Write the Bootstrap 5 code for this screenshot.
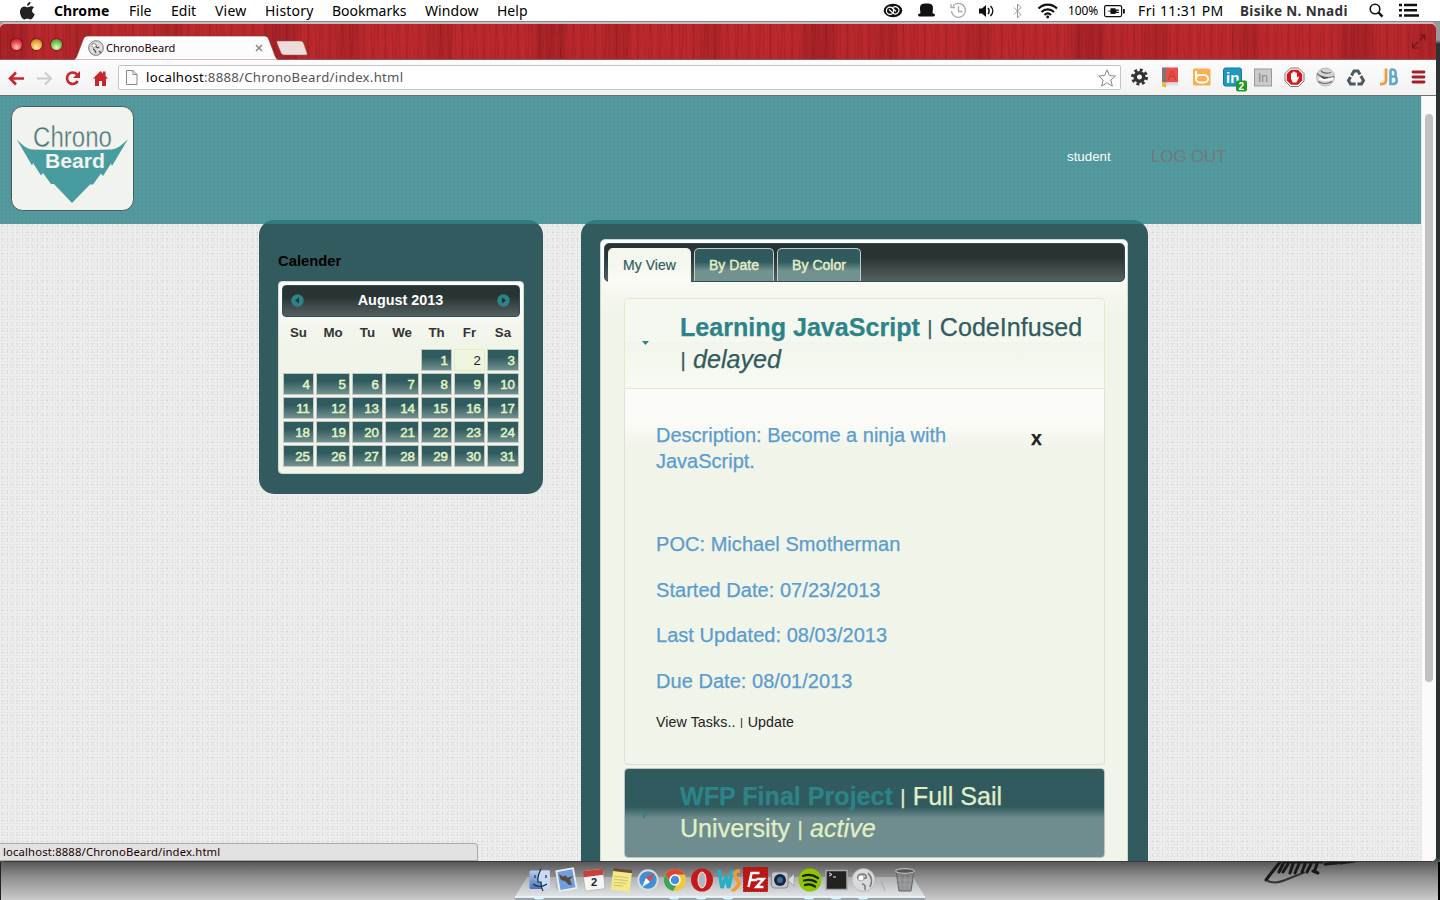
<!DOCTYPE html>
<html lang="en">
<head>
<meta charset="utf-8">
<title>ChronoBeard</title>
<link href="https://cdn.jsdelivr.net/npm/bootstrap@5.3.0/dist/css/bootstrap.min.css" rel="stylesheet">
<style>
:root{--teal:#2c8489;--deep:#325b5f;--cream:#f1f4e9;--lime:#e1f0c4}
html,body{height:900px}
body{width:1440px;overflow:hidden;background:linear-gradient(#999 0,#999 22px,#999 40px,#2c3133 44px,#2c3133 858px,#555 861px,#8b8b8b 876px,#cacaca 900px);font-family:"Liberation Sans",sans-serif;font-size:14px;color:#000;line-height:1.2}
svg{display:block;flex:none}
.ui{font-family:"Noto Sans","Open Sans",sans-serif}
/* menu bar */
.menubar{height:22px;background:#fff;border-bottom:1px solid #888;padding:1px 0 0 19px;font-size:14px;white-space:nowrap;position:relative}
.menubar .item{flex:none}
.m1{width:75px;letter-spacing:.1px}.m2{width:42px}.m3{width:44px}.m4{width:50px;letter-spacing:.2px}.m5{width:67px;letter-spacing:.2px}.m6{width:93px}.m7{width:72px;letter-spacing:.1px}.m8{width:386px}
.tray1{width:36px;font-size:12px;letter-spacing:-.1px;flex:none}.tray2{width:102px;flex:none;letter-spacing:.4px}.tray3{width:126px;flex:none;color:#333;font-size:13.5px;letter-spacing:.36px}
/* window */
.win{width:1436px;height:840px;padding-top:2px;background:#c9b9b9;border-radius:5px 5px 5px 5px;overflow:hidden;border-bottom:1px solid #3a3a3a}
.strip{height:36px;border-radius:5px 5px 0 0;border-bottom:1px solid #8c5c5c;padding-left:11px;position:relative;
background:repeating-linear-gradient(92deg,rgba(80,0,5,.1) 0 1px,transparent 2px 5px,rgba(255,60,60,.07) 6px 7px,transparent 8px 11px),repeating-linear-gradient(88deg,rgba(70,0,5,.09) 0 1px,transparent 2px 7px),repeating-linear-gradient(90deg,rgba(60,0,5,.14) 0 26px,rgba(60,0,5,.02) 30px 60px,rgba(60,0,5,.1) 76px 90px,rgba(60,0,5,0) 92px 150px,rgba(60,0,5,.1) 170px 182px,rgba(60,0,5,0) 184px 260px,rgba(60,0,5,.12) 269px),#b9282d}
.lamp{width:11px;height:11px;border-radius:50%;margin-right:9px;box-shadow:0 0 1px 1px rgba(90,20,20,.6);position:relative;top:3px}
.lamp.r{background:radial-gradient(circle at 50% 75%,#ffc8c0,#ee4348 55%,#a92a30)}
.lamp.y{background:radial-gradient(circle at 50% 75%,#fff0b0,#eba638 55%,#a56a20)}
.lamp.g{background:radial-gradient(circle at 50% 75%,#e0ffc0,#71bf52 55%,#3e7a30)}
.tabshape{position:absolute;left:70px;top:11px}
.tabtext{position:absolute;left:106px;top:16px;font-size:11.1px;line-height:16px;color:#200}
.toolbar-row{height:36px;background:linear-gradient(#fcfcfc,#f2f2f2);border-bottom:1px solid #6f6f6f;padding-left:8px;position:relative}
.omni{width:1003px;height:25px;border:1px solid #c4c4c4;border-radius:2px;background:#fff;padding:0 3px 0 6px;font-size:13.2px;color:#555}
.omni b{font-weight:400;color:#000}
.url{letter-spacing:.26px}
/* page */
.viewport{height:766px;background:#fbfbfb}
.page{width:1421px;overflow:hidden;background-color:#ededed;background-image:radial-gradient(#dadada .7px,transparent .9px),radial-gradient(#d8d8d8 .6px,transparent .9px);background-size:3px 3px,5px 7px}
.top{height:128px;background-color:#53999e;background-image:radial-gradient(rgba(30,100,105,.18) .6px,transparent .8px);background-size:4px 4px;padding:10px 0 0 11px;position:relative}
.who{margin:43px 0 0 933px;color:#fff;font-size:13.3px;width:84px}.out{margin-top:41px;color:#74777a;font-size:17px;letter-spacing:-.15px}
.panelbox{background:linear-gradient(#2e7b80 4px,var(--deep) 4px);border-radius:15px;margin-top:-4px;position:relative}
.cal{width:284px;height:274px;margin-left:259px;padding:32px 19px 0}
.cal h6{font-size:14.8px;font-weight:700;line-height:18px;margin:0 0 11px}
.dp{width:246px;height:193px;border:1px solid #d5d9d5;border-radius:4px;background:linear-gradient(#fff,#f1f4e9 60px);padding:3px}
.dphead{height:32px;border:1px solid #2b5155;border-radius:4px;background:linear-gradient(#283434 35%,#556060);color:#fff;font-weight:700;font-size:14.4px;padding:0 9px 0 8px}
.dphead svg{position:relative;top:-1px}
.week{display:grid;grid-template-columns:31px 34px 31px 34px 31px 31px 32px;gap:2px;padding-left:1px}
.dow{height:32px;align-items:center;text-align:center;font-weight:700;font-size:13.3px;color:#333}
.days>span{height:22px;border:1px solid #c0c8c5;background:linear-gradient(#2f5a5e 35%,#73908f);color:#e1f5c4;text-align:right;padding:0 3px;line-height:22px;font-size:13.3px;-webkit-text-stroke:.5px #e1f5c4}
.days>.today{background:#eef6df;border-color:#dfefbf;color:#222;-webkit-text-stroke:0}
.days>.off{visibility:hidden}
.main{width:567px;height:700px;margin-left:38px;padding:19px 19px 0}
.tabsbox{width:528px;height:690px;border:1px solid #cfd6d3;border-radius:5px;background:linear-gradient(#fff 0,#f9faf4 40px,#f1f4e9 75px);padding:3px 2px 0 3px}
.tabnav{width:521px;height:39px;border:1px solid #2b5155;border-radius:5px;background:linear-gradient(#283434 35%,#556060);padding:4px 0 0 3px}
.tabnav span{height:33px;border:1px solid #c5cdc9;border-bottom:0;border-radius:5px 5px 0 0;background:linear-gradient(#2f5a5e 40%,#72918f 68%);color:var(--lime);padding:8px 14px 0;margin-right:3px;white-space:nowrap;letter-spacing:.04px;-webkit-text-stroke:.45px var(--lime)}
.tabnav span.on{background:linear-gradient(#f3f7ee 45%,#fbfcf8);border-color:#f3f7e8;color:var(--deep);height:34px;-webkit-text-stroke:.2px var(--deep)}
.acc{width:481px;margin:16px 0 0 20px}
.acch{padding:12px 18px 0 55px;font-size:25.1px;line-height:32px;position:relative;white-space:nowrap;-webkit-text-stroke:.25px}
.acch b{color:var(--teal)}
.acch .bar{font-size:.8em;line-height:0;position:relative;top:-.06em;margin:0 .02em}
.acch svg{position:absolute;left:16px}
.acch.open{height:91px;border:1px solid #e1edc2;border-radius:4px 4px 0 0;color:var(--deep);background:linear-gradient(#f5f8f0 48%,#f2f5eb 49%,#f8fbf4)}
.acch.shut{height:90px;border:1px solid #b9c5c2;border-radius:4px;color:var(--lime);background:linear-gradient(#315a5e 43%,#6f8d8e 56%);margin-top:3px;padding-top:11px}
.accb{height:376px;border:1px solid #dcdfda;border-top:0;border-radius:0 0 4px 4px;background:linear-gradient(#fbfcf9,#fafbf6 35px,#f1f4e9 60px);padding:33px 30px 0 31px;position:relative;color:#5a9ccf;font-size:20px;line-height:26px;-webkit-text-stroke:.25px}
.accb p{margin:0 0 19.6px;letter-spacing:.04px}
.accb .desc{margin-bottom:57px;letter-spacing:0}
.accb .more{color:#222;font-size:14.2px;line-height:18px;-webkit-text-stroke:0;letter-spacing:.1px}
.more i{font-style:normal;font-size:.8em;position:relative;top:-1px;margin:0 .5px}
.kill{position:absolute;left:406px;top:36px;font-weight:700;color:#222;font-size:19.5px}
.track{width:15px;background:#fafafa;border-left:1px solid #e8e8e8;padding:18px 0 0 3px}
.thumb{width:8px;height:568px;border-radius:4px;background:#c1c1c1}
.status{position:absolute;left:0;top:843px;width:478px;height:18px;background:#e2e2e2;border:1px solid #aaa;border-left:0;border-radius:0 4px 0 0;font-size:11.3px;letter-spacing:.14px;line-height:16px;padding-left:3px;color:#200}
.dock{position:absolute;left:0;top:862px}
</style>
</head>
<body>
<div class="menubar ui d-flex align-items-center">
<svg width="35" height="20" viewBox="0 0 35 20"><path d="M11.500.8c.3 2-1.500 4-3.500 4C7.700 3 9.500 1 11.500.8zM15 6.500c-2.800 1.800-2.300 5.400.7 6.700-.7 2-2.400 5.200-4.200 5.200-1.200 0-1.700-.7-3-.7s-1.900.7-3 .7C3.300 18.400 1 14.400 1 11c0-3.500 2.200-5.600 4.600-5.600 1.300 0 2.200.8 3.300.8 1 0 1.900-.9 3.400-.9 1 0 2.100.5 2.700 1.200z" fill="#222"/></svg>
<span class="item fw-bold m1">Chrome</span><span class="item m2">File</span><span class="item m3">Edit</span><span class="item m4">View</span><span class="item m5">History</span><span class="item m6">Bookmarks</span><span class="item m7">Window</span><span class="item m8">Help</span>
<svg width="185" height="22" viewBox="883 0 185 22" fill="none" stroke="#111">
<ellipse cx="893" cy="10.500" rx="9.300" ry="6.800" fill="#111" stroke="none"/><circle cx="890" cy="10.700" r="3.600" stroke="#fff" stroke-width="1.200"/><path d="M889 9.500l4.500 4a3.600 3.600 0 1 0-1-5.500l3.500 3.500" stroke="#fff" stroke-width="1.200"/>
<path d="M920.500 13c-1.500-9 .5-9.500 6-9.500s7.500.5 6 9.500l2.500 1.500c0 2-1 2-3 2h-11c-2 0-3 0-3-2z" fill="#111" stroke="none"/>
<g stroke="#aaa" stroke-width="1.300"><path d="M953 6a7 7 0 1 1-1.500 5M958.500 6v5.500h4M951 4v3.500h4"/></g>
<path d="M979 8.500h3l4-3.500v12l-4-3.500h-3z" fill="#111" stroke="none"/><path d="M988 8c1.500 2 1.500 4 0 6M990.500 6c3 3 3 7 0 10" stroke-width="1.500"/>
<path d="M1014 7.500l7 7-3.500 3.500V4l3.500 3.500-7 7" stroke="#999"/>
<path d="M1038.500 8.500c5-5.200 13.500-5.200 18.500 0M1041.500 12c3.500-3.500 9-3.500 12.500 0M1044.500 15c2-2 4.500-2 6.500 0" stroke-width="2.200"/><circle cx="1047.700" cy="17" r="1.400" fill="#111" stroke="none"/>
</svg>
<span class="tray1">100%</span>
<svg width="34" height="22" viewBox="1104 0 34 22"><rect x="1104.600" y="5.600" width="17" height="11" rx="1.500" fill="none" stroke="#111" stroke-width="1.200"/><path d="M1123 9h1.800v4.500H1123z" fill="#111"/><path d="M1107 11l3.500-.5V8.300h5v1.200h3.500v1.200h-2.500v1h2.500v1.200h-3.500V14h-5v-2.300z" fill="#111"/></svg>
<span class="tray2">Fri 11:31 PM</span><span class="tray3 fw-bold">Bisike N. Nnadi</span>
<svg width="56" height="22" viewBox="1366 0 56 22" fill="none" stroke="#111"><circle cx="1375" cy="9" r="4.800" stroke-width="1.600"/><path d="M1378.500 12.500l4 4.200" stroke-width="2.400"/><path d="M1399 5h3M1404 5h13M1399 10.200h3M1404 10.200h13M1399 15.500h3M1404 15.500h15" stroke-width="2.600"/></svg>
</div>
<div class="win">
<div class="strip d-flex align-items-center">
<i class="lamp r"></i><i class="lamp y"></i><i class="lamp g"></i>
<svg class="tabshape" width="240" height="25" viewBox="70 35 240 25"><path d="M73 60c3-1 3.500-3 5-7l5-13c1-3 2-4 5-4h176c3 0 4 1 5 4l5 13c1.500 4 2 6 5 7z" fill="#fcfcfc" stroke="#8f3a3a" stroke-width=".7"/><path d="M278 41h22c2 0 3 .8 3.500 2l3.500 10c.5 1.500 0 2-1.500 2h-21c-2 0-3-.8-3.500-2l-4-10c-.5-1.500 0-2 1-2z" fill="#ecdcdc" stroke="#a05050" stroke-width=".5"/><circle cx="96" cy="48" r="7.300" fill="#ddd" stroke="#777"/><path d="M92 45c2-2 4-1 4 1s2 2 3 1M93 49c2 0 2 2 3 4M99 51l2 2" fill="none" stroke="#555" stroke-width="1.300"/><circle cx="94" cy="45.500" r="2" fill="#fff" stroke="#777" stroke-width=".6"/><path d="M256 45l6 6M262 45l-6 6" stroke="#888" stroke-width="1.500"/></svg>
<span class="tabtext ui">ChronoBeard</span>
<svg class="ms-auto me-2" width="18" height="18" viewBox="0 0 18 18" fill="none" stroke="#6d1418" stroke-width="1.200"><path d="M9.500 2H15v5.500M15 2l-5.500 5.500M2.500 9.500V15H8M2.500 14.500L8 9"/></svg>
</div>
<div class="toolbar-row d-flex align-items-center">
<svg width="110" height="34" viewBox="8 60 110 34" fill="none" stroke="#c9252d" stroke-width="2.600"><path d="M10.500 77.500H24M16 71.500l-6 6 6 6"/><path d="M37 77.500h13M45 71.500l6 6-6 6" stroke="#ccc" stroke-width="2"/><path d="M77 73.500a5.700 5.700 0 1 0 .7 6.500"/><path d="M80 70v7h-7z" fill="#c9252d" stroke="none"/><path d="M93 77.500l7.500-7.500 2.500 2.500V70.500h2.500V75l2.500 2.500h-2V85h-4v-5h-3v5h-4v-7.500z" fill="#c9252d" stroke="none"/></svg>
<div class="omni ui d-flex align-items-center"><svg class="me-2" width="13" height="17" viewBox="0 0 13 17"><path d="M1.500 1.500h6.500l4 4v10H1.500zM8 1.500v4h4" fill="#fafafa" stroke="#888"/></svg><span class="url"><b>localhost</b>:8888/ChronoBeard/index.html</span>
<svg class="ms-auto" width="20" height="20" viewBox="0 0 20 20"><path d="M10 1.800l2.400 5.800 6.100.4-4.700 4 1.500 6.100L10 14.800l-5.300 3.300 1.500-6.100-4.700-4 6.100-.4z" fill="#fff" stroke="#888"/></svg></div>
<svg width="312" height="36" viewBox="1121 60.500 312 36">
<g transform="translate(1139.500 77.500)"><g fill="none" stroke="#333"><circle r="4.300" stroke-width="3.600"/><circle r="7" stroke-width="3" stroke-dasharray="2.900 2.600"/></g></g>
<path d="M1162 68h5v18h-5z" fill="#777"/><path d="M1166 68h12v15h-12z" fill="#ea4f48"/><path d="M1163 83h15v3h-15z" fill="#ddd"/><path d="M1162 82l4 2v4l-4-1z" fill="#f4b63b"/><text x="1167.500" y="80" font-size="13" font-family="Liberation Sans" fill="#c23d38">A</text>
<rect x="1193" y="69" width="17.500" height="17" rx="1.500" fill="#fdae4f"/><path d="M1196 71.500v7" fill="none" stroke="#fff" stroke-width="2"/><rect x="1196" y="75.500" width="12" height="7.500" rx="3.700" fill="none" stroke="#fff" stroke-width="2"/>
<rect x="1223.500" y="68.500" width="18" height="18" rx="2" fill="#2097bd" stroke="#127a9c"/><text x="1226" y="83" font-family="Liberation Sans" font-weight="bold" font-size="15" fill="#fff">in</text><rect x="1236" y="81" width="11" height="11" rx="2" fill="#1d9b27"/><text x="1238.500" y="90" font-family="Liberation Sans" font-weight="bold" font-size="10" fill="#fff">2</text>
<rect x="1254.500" y="69.500" width="17" height="17" fill="#cbcbcb" stroke="#999"/><text x="1258" y="82.500" font-family="Liberation Sans" font-size="12" fill="#888">In</text>
<path d="M1290.500 68.500h8l5.500 5.500v7.500l-5.500 5.500h-8l-5.500-5.500V74z" fill="#fff" stroke="#777"/><path d="M1291 70.200h7l4.200 4.300v6.500l-4.200 4.200h-7l-4.200-4.200v-6.500z" fill="#d9151c"/><path d="M1291 79v-5q.8-1 1.500 0v-1.500q.8-1 1.500 0v0q.8-1 1.500 0v1q.8-1 1.500 0V78q1.500-2 2 0l-2.500 5h-4z" fill="#fff"/>
<circle cx="1325.500" cy="77.500" r="9" fill="#d3d6d8" stroke="#999" stroke-width=".6"/><path d="M1317 74q6 6 17 3M1318 82q7 4 14 0M1321 71q2 4 10 2" stroke="#666" stroke-width="1.200" fill="none"/><path d="M1319 79q6 3 14 0" stroke="#fff" stroke-width="2" fill="none"/><path d="M1321 77l3 2 4-1" stroke="#333" fill="none"/>
<g transform="translate(1356 79)" fill="none" stroke="#4b5963" stroke-width="3"><path d="M-4.500-3L-2-7.500H2L4-4"/><path d="M-4.500-3L-2-7.500H2L4-4" transform="rotate(120)"/><path d="M-4.500-3L-2-7.500H2L4-4" transform="rotate(240)"/></g>
<path d="M1386 69v12q0 4-6 3.500" fill="none" stroke="#ef9c35" stroke-width="2.800"/><path d="M1390.500 70h2q4 0 3 6.500 3.500 8-3 8h-2V70M1390 77h5" fill="none" stroke="#5ba9cf" stroke-width="2.600"/>
<path d="M1413 72.500h11M1413 77.500h11M1413 82.500h11" stroke="#a31f28" stroke-width="2.800" stroke-linecap="round"/>
</svg>
</div>
<div class="viewport d-flex">
<div class="page">
<header class="top d-flex">
<svg width="123" height="105" viewBox="11 106 123 105"><rect x="11.500" y="106.500" width="122" height="104" rx="11" fill="#f1f4ee" stroke="#4c5a5b"/><path d="M16.500 139C23 146 27 149 33 149.500Q72 151 111 149.500C117 149 121 146 128 139l-16 27-1-2.500-8 12.500-2-2.500-8 11h-3L72 203 54 184h-3l-8-11-2 2.500-8-12.500-1 2.500z" fill="#489b9e"/><text x="33" y="147" font-family="Liberation Sans" font-size="29" textLength="79" lengthAdjust="spacingAndGlyphs" fill="#527579" stroke="#f1f4ee" stroke-width=".4">Chrono</text><text x="45" y="167.500" font-family="Liberation Sans" font-weight="bold" font-size="20.500" textLength="60" lengthAdjust="spacingAndGlyphs" fill="#f1f4ee">Beard</text></svg>
<span class="who">student</span><span class="out">LOG OUT</span>
</header>
<div class="d-flex align-items-start">
<section class="panelbox cal">
<h6>Calender</h6>
<div class="dp">
<div class="dphead d-flex align-items-center justify-content-between"><svg width="13" height="13" viewBox="0 0 13 13"><circle cx="6.500" cy="6.500" r="6.200" fill="#2c8489"/><path d="M8 3.500v6l-4-3z" fill="#233"/></svg><span>August 2013</span><svg width="13" height="13" viewBox="0 0 13 13"><circle cx="6.500" cy="6.500" r="6.200" fill="#2c8489"/><path d="M5 3.500v6l4-3z" fill="#233"/></svg></div>
<div class="week dow"><span>Su</span><span>Mo</span><span>Tu</span><span>We</span><span>Th</span><span>Fr</span><span>Sa</span></div>
<div class="week days">
<span class="off"></span><span class="off"></span><span class="off"></span><span class="off"></span><span>1</span><span class="today">2</span><span>3</span><span>4</span><span>5</span><span>6</span><span>7</span><span>8</span><span>9</span><span>10</span><span>11</span><span>12</span><span>13</span><span>14</span><span>15</span><span>16</span><span>17</span><span>18</span><span>19</span><span>20</span><span>21</span><span>22</span><span>23</span><span>24</span><span>25</span><span>26</span><span>27</span><span>28</span><span>29</span><span>30</span><span>31</span>
</div>
</div>
</section>
<section class="panelbox main">
<div class="tabsbox">
<div class="tabnav d-flex"><span class="on">My View</span><span>By Date</span><span>By Color</span></div>
<div class="acc">
<div class="acch open"><svg width="10" height="5" viewBox="0 0 10 5" style="top:42px"><path d="M1 0h7L4.500 4z" fill="#2c8489"/></svg><b>Learning JavaScript</b> <span class="bar">|</span> CodeInfused<br><span class="bar">|</span> <em>delayed</em></div>
<div class="accb"><p class="desc">Description: Become a ninja with<br>JavaScript.</p><p>POC: Michael Smotherman</p><p>Started Date: 07/23/2013</p><p>Last Updated: 08/03/2013</p><p>Due Date: 08/01/2013</p><p class="more">View Tasks.. <i>|</i> Update</p><span class="kill">x</span></div>
<div class="acch shut"><svg width="6" height="8" viewBox="0 0 6 8" style="top:42px;left:18px"><path d="M0 0l4 4-4 4z" fill="#2c8489"/></svg><b>WFP Final Project</b> <span class="bar">|</span> Full Sail<br>University <span class="bar">|</span> <em>active</em></div>
<div class="acch shut"></div>
</div>
</div>
</section>
</div>
</div>
<div class="track"><div class="thumb"></div></div>
</div>
</div>
<div class="status ui">localhost:8888/ChronoBeard/index.html</div>
<svg class="dock" width="1440" height="38" viewBox="0 862 1440 38">
<defs><linearGradient id="sh" x2="0" y2="1"><stop stop-color="#b9bcbe" stop-opacity=".7"/><stop offset="1" stop-color="#e2e6e8"/></linearGradient><linearGradient id="bl" x2="0" y2="1"><stop stop-color="#b5cdf0"/><stop offset="1" stop-color="#4673b8"/></linearGradient></defs>
<g fill="none" stroke="#181818" stroke-linecap="round"><path d="M1280 862l-11 14-3 4" stroke-width="3"/><path d="M1268 881q7 3 16-.5l20-8" stroke-width="2" stroke="#333"/><path d="M1283 864l-4 8M1288 864l-5 8M1293 864l-3 9M1299 864l-4 9M1305 864l-3 8M1311 864l-4 8M1317 864l-2 6" stroke-width="3"/><path d="M1313 871l5 2M1325 864l12-1M1340 863l15-2" stroke-width="3"/><path d="M1284 862h38" stroke-width="3"/></g>
<path d="M527 877h386l12 20H515z" fill="url(#sh)"/><path d="M515 897h410" stroke="#f6f8f8" stroke-width="1.500"/><path d="M515 898h410v2H515z" fill="#9aa3aa"/>
<g fill="#d8f4ff"><ellipse cx="539" cy="898" rx="5" ry="1.500"/><ellipse cx="674" cy="898" rx="5" ry="1.500"/><ellipse cx="701" cy="898" rx="5" ry="1.500"/><ellipse cx="728" cy="898" rx="5" ry="1.500"/><ellipse cx="809" cy="898" rx="5" ry="1.500"/><ellipse cx="836" cy="898" rx="5" ry="1.500"/><ellipse cx="863" cy="898" rx="5" ry="1.500"/></g>
<rect x="529.500" y="870.500" width="20.500" height="18.500" rx="1.500" fill="url(#bl)"/><path d="M541 870.500h9v18.500h-8q-1-4-1-7h-3q0-8 3-12z" fill="#c9daf2"/><path d="M541 869q-4 8-3 13h3q0 5 2 9M533 884q7 5 14 0M535 875v3M546 875v3" fill="none" stroke="#1b2c48" stroke-width="1.200"/>
<circle cx="562" cy="885" r="6" fill="none" stroke="#aaa"/><g transform="rotate(-10 567 880)"><rect x="558" y="869.500" width="17" height="20" fill="#6e9fe0" stroke="#eee" stroke-width="1.800"/><path d="M560 873l4 3 2-1 2 3 6-1-4 3 1 6-3-1-3-4-4-2z" fill="#5b4a3c"/></g>
<g transform="rotate(-7 594 880)"><rect x="584" y="870" width="20" height="20" rx="2" fill="#f5f5f5" stroke="#999" stroke-width=".5"/><path d="M584 870h20v6h-20z" fill="#c9403c"/></g><text x="591" y="886" font-family="Liberation Sans" font-weight="bold" font-size="11" fill="#222">2</text>
<g transform="rotate(7 621 880)"><path d="M612 870h19v21h-19z" fill="#f3e88a"/><path d="M612 869h19v3h-19z" fill="#6c4a33"/><path d="M614 877h14M614 880h14M614 883h12M614 886h10" stroke="#cdbf68"/></g>
<circle cx="648" cy="880" r="9.700" fill="#3e90d8" stroke="#ddd" stroke-width="2"/><path d="M654 873l-4 9-4-4z" fill="#e8442f"/><path d="M642 887l8-5-4-4z" fill="#fff"/>
<circle cx="675" cy="880" r="11" fill="#f2c935"/><path d="M665.500 874.500a11 11 0 0 1 19 0H675l-4 8z" fill="#de4435"/><path d="M665.500 874.500a11 11 0 0 0 7.500 16.500l4-7-6-1z" fill="#3da558"/><circle cx="675" cy="880" r="5" fill="#4b8be0" stroke="#fff" stroke-width="1.500"/>
<ellipse cx="702" cy="880" rx="11" ry="11.500" fill="#c9161d"/><ellipse cx="702" cy="880" rx="4" ry="8" fill="#b5b5b5" stroke="#eee"/>
<path d="M719 870l3 18 4-12 2.500 12 4-18" fill="none" stroke="#2aaec4" stroke-width="3.600" stroke-linejoin="bevel"/><path d="M740 871q-6 0-5 4t3 6-1 6-5 2" fill="none" stroke="#f19a2e" stroke-width="3.600"/>
<path d="M743.500 867.500h24v24h-24z" fill="#bf1514" stroke="#a01010" stroke-dasharray="2 1"/><path d="M748.500 887l3-14h8M750 880h7M756.500 879h7l-7 8h7" fill="none" stroke="#fff" stroke-width="2.600"/>
<rect x="771.500" y="872" width="16.500" height="16" rx="3" fill="#c4c7ca" stroke="#888"/><circle cx="780" cy="880" r="6" fill="#17263d"/><circle cx="780" cy="880" r="3" fill="#4169a1"/><path d="M788 880l6-6v12z" fill="#ddd" stroke="#888" stroke-width=".5"/>
<circle cx="810" cy="880" r="11.500" fill="#8fc400"/><path d="M803 876q8-3 15 2M804 880.500q7-2 12 1.500M805 885q5-2 10 1.500" fill="none" stroke="#17200a" stroke-width="2.200" stroke-linecap="round"/>
<rect x="826" y="870.500" width="21" height="19" fill="#222" stroke="#aaa" stroke-width="1.500"/><path d="M829 873l3 1.500-3 1.500M833 877h3" stroke="#eee" fill="none"/>
<circle cx="863.500" cy="880" r="11.500" fill="#d9dadb" stroke="#aaa" stroke-width=".7"/><path d="M858 879q-1-5 4-5t4 4l-3 1M868 873q6 6 2 14M862 884q4 0 3 6" fill="none" stroke="#777" stroke-width="1.600"/><circle cx="861" cy="878" r="3" fill="#fff" stroke="#888" stroke-width=".7"/>
<path d="M881 881l4 10" stroke="#999" stroke-width=".7"/>
<path d="M896 871h18l-3 20h-12z" fill="#777" fill-opacity=".65" stroke="#666"/><ellipse cx="905" cy="871" rx="9.500" ry="2.300" fill="#555" stroke="#ccc"/><path d="M899 875l2 14M905 875v14M911 875l-2 14M897 880h15M898 885h13" stroke="#aaa" stroke-width=".6"/>
<path d="M0 862h1v38H0z" fill="#222"/><path d="M1438 862h2v38h-2z" fill="#000"/>
</svg>
<script src="https://cdn.jsdelivr.net/npm/bootstrap@5.3.0/dist/js/bootstrap.bundle.min.js"></script>
</body>
</html>
